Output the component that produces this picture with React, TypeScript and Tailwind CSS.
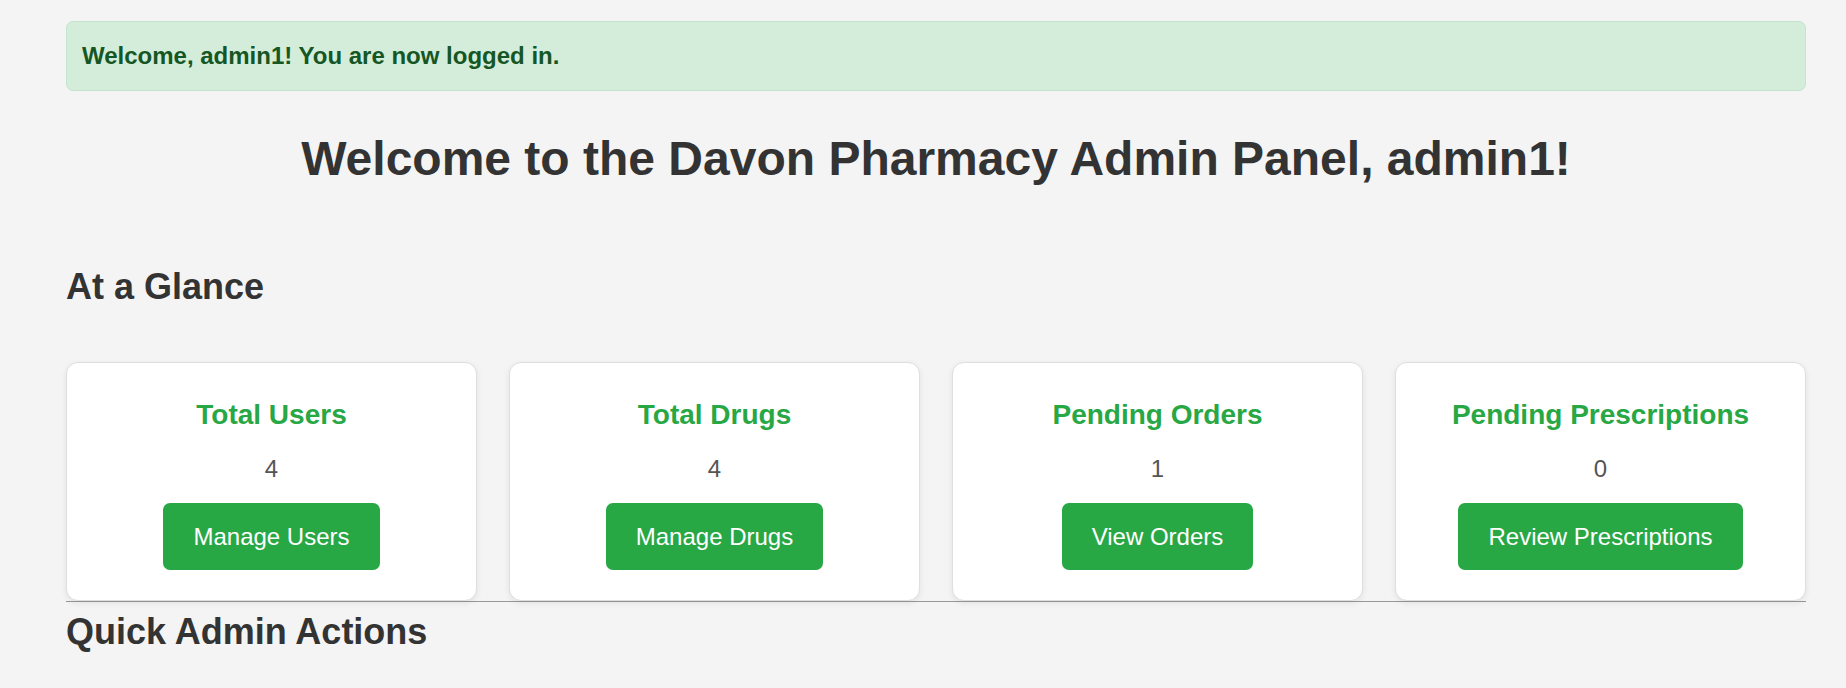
import React from "react";

interface StatProps {
  title: string;
  value: number;
  action: string;
}

const stats: StatProps[] = [
  { title: "Total Users", value: 4, action: "Manage Users" },
  { title: "Total Drugs", value: 4, action: "Manage Drugs" },
  { title: "Pending Orders", value: 1, action: "View Orders" },
  { title: "Pending Prescriptions", value: 0, action: "Review Prescriptions" },
];

const StatCard: React.FC<StatProps> = ({ title, value, action }) => (
  <div className="flex flex-col items-center rounded-[12px] border border-[#dedede] bg-white p-[30px] text-center shadow-[0_2px_6px_rgba(0,0,0,0.08)]">
    <h3 className="mb-[12px] text-[28px] font-bold leading-[44.8px] text-[#28a745]">
      {title}
    </h3>
    <p className="mb-[15px] text-[24px] leading-[38.4px] text-[#555]">{value}</p>
    <button className="rounded-[7px] bg-[#28a745] px-[30px] py-[15px] text-[24px] leading-[37.4px] text-white">
      {action}
    </button>
  </div>
);

export default function App() {
  return (
    <div className="min-h-screen bg-[#f4f4f4] pl-[66px] pr-[40px] pt-[21px] font-['Liberation_Sans',Arial,sans-serif] text-[#333]">
      <div className="rounded-[7px] border border-[#c3e6cb] bg-[#d4edda] p-[15px] text-[24px] font-bold leading-[38.4px] text-[#155724]">
        Welcome, admin1! You are now logged in.
      </div>

      <h1 className="mt-[30px] text-center text-[48px] font-bold leading-[76.8px]">
        Welcome to the Davon Pharmacy Admin Panel, admin1!
      </h1>

      <h2 className="mt-[60px] text-[36px] font-bold leading-[57.6px]">At a Glance</h2>

      <div className="mt-[46px] grid grid-cols-4 gap-x-[32px] border-b border-[#999]">
        {stats.map((s) => (
          <StatCard key={s.title} {...s} />
        ))}
      </div>

      <h2 className="mt-[1px] text-[36px] font-bold leading-[57.6px]">Quick Admin Actions</h2>
    </div>
  );
}
